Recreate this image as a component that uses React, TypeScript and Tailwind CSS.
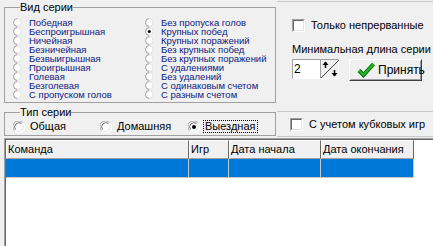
import React from 'react'

const leftSeries = [
  'Победная',
  'Беспроигрышная',
  'Ничейная',
  'Безничейная',
  'Безвыигрышная',
  'Проигрышная',
  'Голевая',
  'Безголевая',
  'С пропуском голов',
]

const rightSeries = [
  'Без пропуска голов',
  'Крупных побед',
  'Крупных поражений',
  'Без крупных побед',
  'Без крупных поражений',
  'С удалениями',
  'Без удалений',
  'С одинаковым счетом',
  'С разным счетом',
]

function SmallRadio({ checked }: { checked?: boolean }) {
  return (
    <svg width="8" height="9" viewBox="0 0 8 9" className="shrink-0">
      <path d="M4 0.5 A4 4 0 0 0 4 8.5 A4 4 0 0 0 4 0.5" fill="#fff" />
      <path d="M4.5 0.5 A4 4 0 0 0 4.5 8.5" stroke="#9a9a9a" fill="none" />
      <path d="M4 0.5 A4 4 0 0 1 4 8.5" stroke="#e2e2e2" fill="none" />
      {checked && <circle cx="4.3" cy="4.5" r="1.5" fill="#000" />}
    </svg>
  )
}

function Radio({ checked }: { checked?: boolean }) {
  return (
    <svg width="12" height="12" viewBox="0 0 12 12" className="shrink-0">
      <circle cx="6" cy="6" r="5.5" fill="#fff" />
      <path d="M1.5 9.5 A5.5 5.5 0 0 1 9.5 1.5" stroke="#a0a0a0" fill="none" />
      <path d="M2.5 8.5 A4.3 4.3 0 0 1 8.5 2.5" stroke="#696969" fill="none" />
      <path d="M10.5 2.5 A5.5 5.5 0 0 1 2.5 10.5" stroke="#fff" fill="none" />
      <path d="M9.5 3.5 A4.3 4.3 0 0 1 3.5 9.5" stroke="#e3e3e3" fill="none" />
      {checked && <circle cx="6" cy="6" r="2" fill="#000" />}
    </svg>
  )
}

function Checkbox() {
  return (
    <div className="w-[13px] h-[13px] shrink-0 bg-white border border-t-[#a0a0a0] border-l-[#a0a0a0] border-r-white border-b-white">
      <div className="w-full h-full border border-t-[#696969] border-l-[#696969] border-r-[#e3e3e3] border-b-[#e3e3e3]" />
    </div>
  )
}

function CheckGlyph() {
  return (
    <svg width="18" height="16" viewBox="0 0 18 16" className="shrink-0">
      <polyline points="2,8.5 6.5,13 16.5,2" fill="none" stroke="#0b5d0b" strokeWidth="4" strokeLinejoin="miter" />
      <polyline points="2,8.5 6.5,13 16.5,2" fill="none" stroke="#1fc11f" strokeWidth="2" strokeLinejoin="miter" />
    </svg>
  )
}

function SpinArrows() {
  return (
    <svg width="18" height="18" viewBox="0 0 18 18">
      <line x1="0" y1="18" x2="18" y2="0" stroke="#404040" strokeWidth="1" />
      <line x1="4.5" y1="2" x2="4.5" y2="8" stroke="#000" strokeWidth="1.5" />
      <polygon points="1.5,5 4.5,1.5 7.5,5" fill="#000" />
      <line x1="13.5" y1="10" x2="13.5" y2="16" stroke="#000" strokeWidth="1.5" />
      <polygon points="10.5,13 13.5,16.5 16.5,13" fill="#000" />
    </svg>
  )
}

export default function App() {
  return (
    <div className="w-[433px] h-[246px] overflow-hidden bg-[#f0f0f0] font-['Liberation_Sans',Arial,sans-serif] text-black select-none">
      <div className="flex h-[138px]">
        {/* left: groups */}
        <div className="w-[277px] pl-[4px] pt-[1px]">
          <fieldset className="w-[272px] border border-[#a0a0a0] pl-[8px] pt-[5px] pb-[3px]">
            <legend className="ml-[7px] text-[11px] leading-[12px]">Вид серии</legend>
            <div className="flex">
              <div className="w-[132px] flex flex-col">
                {leftSeries.map((s) => (
                  <div key={s} className="h-[9px] flex items-center gap-[8px] text-[9.5px] leading-[9px] text-[#0c1a80] whitespace-nowrap">
                    <SmallRadio />
                    <span>{s}</span>
                  </div>
                ))}
              </div>
              <div className="flex flex-col">
                {rightSeries.map((s, i) => (
                  <div key={s} className="h-[9px] flex items-center gap-[8px] text-[9.5px] leading-[9px] text-[#0c1a80] whitespace-nowrap">
                    <SmallRadio checked={i === 1} />
                    <span>{s}</span>
                  </div>
                ))}
              </div>
            </div>
          </fieldset>

          <fieldset className="w-[272px] mt-[3px] border border-[#a0a0a0] pl-[8px] pt-[2px] pb-[2px]">
            <legend className="ml-[7px] text-[11px] leading-[12px]">Тип серии</legend>
            <div className="flex h-[13px] items-center text-[11px] leading-[13px]">
              <div className="w-[87px] flex items-center gap-[5px]">
                <Radio />
                <span>Общая</span>
              </div>
              <div className="w-[88px] flex items-center gap-[5px]">
                <Radio />
                <span>Домашняя</span>
              </div>
              <div className="flex items-center gap-[3px]">
                <Radio checked />
                <span className="border border-dotted border-black px-[1px] leading-[11px]">Выездная</span>
              </div>
            </div>
          </fieldset>
        </div>

        {/* right: options */}
        <div className="flex-1 flex flex-col pt-[1px]">
          <div className="h-[107px] border-t border-[#c8c8c8] pl-[15px] pt-[17px] text-[11px] leading-[13px]">
            <div className="flex items-center gap-[6px]">
              <Checkbox />
              <span>Только непрерванные</span>
            </div>
            <div className="mt-[11px] whitespace-nowrap">Минимальная длина серии</div>
            <div className="mt-[3px] flex items-start">
              <div className="w-[47px] h-[20px] flex bg-white border border-t-[#a0a0a0] border-l-[#a0a0a0] border-r-white border-b-white">
                <div className="flex-1 pl-[1px] text-[12px] leading-[18px]">2</div>
                <div className="w-[18px] h-[18px] bg-[#f0f0f0] border-l border-[#a0a0a0]">
                  <SpinArrows />
                </div>
              </div>
              <div className="ml-[10px] w-[73px] h-[22px] border border-t-white border-l-white border-r-[#404040] border-b-[#404040] bg-[#f0f0f0]">
                <div className="h-full flex items-center gap-[3px] pl-[6px] border border-t-[#f0f0f0] border-l-[#f0f0f0] border-r-[#a0a0a0] border-b-[#a0a0a0] text-[12px]">
                  <CheckGlyph />
                  <span>Принять</span>
                </div>
              </div>
            </div>
          </div>
          <div className="mt-[3px] h-[26px] border-t border-b border-[#c8c8c8] pl-[13px] flex items-center gap-[6px] text-[11px]">
            <Checkbox />
            <span>С учетом кубковых игр</span>
          </div>
        </div>
      </div>

      {/* grid */}
      <div className="ml-[4px] h-[108px] border-l border-t border-[#a0a0a0]">
        <div className="h-full bg-white border-l border-t border-[#696969] text-[11px]">
          <div className="flex h-[19px]">
            {[
              ['Команда', 'w-[183px]'],
              ['Игр', 'w-[40px]'],
              ['Дата начала', 'w-[92px]'],
              ['Дата окончания', 'w-[93px]'],
            ].map(([t, w]) => (
              <div key={t} className={`${w} h-full flex items-center pl-[1px] bg-[#f0f0f0] border border-t-white border-l-white border-r-[#696969] border-b-[#a0a0a0]`}>
                {t}
              </div>
            ))}
          </div>
          <div className="flex h-[19px]">
            {['w-[183px]', 'w-[40px]', 'w-[92px]', 'w-[93px]'].map((w) => (
              <div key={w} className={`${w} h-full bg-[#0078d7] border-r border-b border-[#c8c8c8]`} />
            ))}
          </div>
        </div>
      </div>
    </div>
  )
}
